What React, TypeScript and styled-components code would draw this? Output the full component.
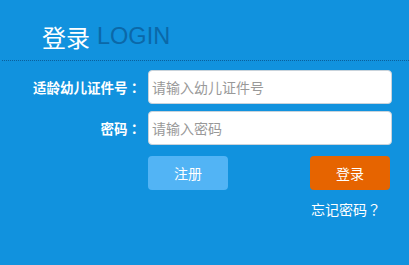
import React from "react";
import styled, { createGlobalStyle } from "styled-components";

const Global = createGlobalStyle`
  html, body { margin: 0; padding: 0; background: #1192de; }
  body { font-family: "Liberation Sans", "Noto Sans CJK SC", sans-serif; }
`;

const Page = styled.div`
  width: 409px;
  height: 265px;
  background: #1192de;
  overflow: hidden;
`;

const Header = styled.div`
  height: 61px;
  margin-left: 2px;
  border-bottom: 1px dotted #0b5f9a;
  padding-left: 40px;
  display: flex;
  align-items: flex-end;
  box-sizing: border-box;
  padding-bottom: 11px;
`;

const TitleCn = styled.span`
  font-family: "Noto Sans CJK SC", sans-serif;
  font-size: 24px;
  color: #fff;
  line-height: 1;
`;

const TitleEn = styled.span`
  font-family: "Liberation Sans", Arial, sans-serif;
  font-size: 23.5px;
  color: #0b68a8;
  margin-left: 7px;
  line-height: 1;
  position: relative;
  top: -1px;
`;

const Form = styled.div`
  padding-top: 9px;
  display: flex;
  flex-direction: column;
  gap: 7px;
`;

const Row = styled.div`
  display: grid;
  grid-template-columns: 148px 244px;
  align-items: center;
`;

const Label = styled.label`
  font-family: "Noto Sans CJK SC", sans-serif;
  font-size: 13.5px;
  font-weight: bold;
  color: #fff;
  text-align: right;
  padding-right: 7px;
`;

const Punct = styled.span`
  font-family: "Noto Sans CJK JP", sans-serif;
`;

const Input = styled.input`
  box-sizing: border-box;
  height: 34px;
  width: 244px;
  border: 1px solid #c9d3db;
  border-radius: 4px;
  background: #fff;
  padding: 0 0 0 3px;
  font-family: "Noto Sans CJK SC", sans-serif;
  font-size: 14px;
  color: #333;
  outline: none;
  &::placeholder { color: #999; }
`;

const ButtonRow = styled.div`
  display: flex;
  justify-content: space-between;
  margin-left: 148px;
  width: 242px;
  margin-top: 4px;
`;

const Button = styled.button<{ $variant: "light" | "orange" }>`
  width: 80px;
  height: 34px;
  border: none;
  border-radius: 4px;
  background: ${(p) => (p.$variant === "orange" ? "#e66400" : "#52b4f5")};
  color: #fff;
  font-family: "Noto Sans CJK SC", sans-serif;
  font-size: 14px;
  cursor: pointer;
  padding: 0;
`;

const Forgot = styled.a`
  display: block;
  margin-left: 311px;
  margin-top: 9px;
  font-family: "Noto Sans CJK SC", sans-serif;
  font-size: 14px;
  color: #fff;
  text-decoration: none;
`;

export default function App() {
  return (
    <Page>
      <Global />
      <Header>
        <TitleCn>登录</TitleCn>
        <TitleEn>LOGIN</TitleEn>
      </Header>
      <Form>
        <Row>
          <Label>
            适龄幼儿证件号<Punct>：</Punct>
          </Label>
          <Input placeholder="请输入幼儿证件号" />
        </Row>
        <Row>
          <Label>
            密码<Punct>：</Punct>
          </Label>
          <Input type="password" placeholder="请输入密码" />
        </Row>
        <ButtonRow>
          <Button $variant="light">注册</Button>
          <Button $variant="orange">登录</Button>
        </ButtonRow>
      </Form>
      <Forgot href="#">
        忘记密码<Punct>？</Punct>
      </Forgot>
    </Page>
  );
}
